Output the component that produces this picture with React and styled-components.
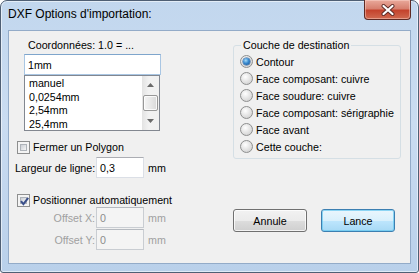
import React from 'react';
import styled, { createGlobalStyle } from 'styled-components';

const GlobalStyle = createGlobalStyle`
  html, body {
    margin: 0;
    padding: 0;
    background: #ffffff;
  }
  body {
    font-family: "Liberation Sans", Arial, sans-serif;
    font-size: 10.7px;
    color: #000;
  }
  * {
    box-sizing: border-box;
  }
`;

const Window = styled.div`
  width: 419px;
  height: 273px;
  border: 1px solid #4f5f74;
  border-radius: 7px 7px 3px 3px;
  background: linear-gradient(to bottom, #c2d7ee 0%, #cadcf1 45%, #b9d0ea 100%);
  box-shadow: inset 0 0 0 1px rgba(255, 255, 255, 0.55);
  padding: 0 7px 8px;
  display: flex;
  flex-direction: column;
`;

const TitleBar = styled.div`
  height: 29px;
  display: flex;
  justify-content: space-between;
  align-items: flex-start;
`;

const Title = styled.div`
  font-size: 12px;
  line-height: 15px;
  margin-top: 6px;
`;

const CloseButton = styled.div`
  width: 47px;
  height: 20px;
  margin-top: -1px;
  border: 1px solid #5e2a24;
  border-top: none;
  border-radius: 0 0 4px 4px;
  background: linear-gradient(to bottom, #e9a99b 0%, #d7806f 45%, #c4432d 55%, #d06a50 100%);
  box-shadow: inset 0 0 0 1px rgba(255, 220, 210, 0.45);
  display: flex;
  align-items: center;
  justify-content: center;
`;

const Client = styled.div`
  flex: 1;
  background: #f0f0f0;
  border: 1px solid #93abc8;
  display: flex;
`;

const LeftCol = styled.div`
  width: 224px;
  display: flex;
  flex-direction: column;
`;

const RightCol = styled.div`
  width: 168px;
  display: flex;
  flex-direction: column;
`;

const Caption = styled.div`
  margin: 8px 0 0 19px;
  line-height: 13px;
`;

const TextBox = styled.div`
  width: ${(p) => p.$width}px;
  height: 21px;
  padding-left: 3px;
  display: flex;
  align-items: center;
  background: ${(p) => (p.$disabled ? '#f4f4f4' : '#ffffff')};
  color: ${(p) => (p.$disabled ? '#8d8d8d' : '#000')};
  border: 1px solid ${(p) => (p.$focused ? '#a9c6e3' : p.$disabled ? '#c9cdd2' : '#dbdfe6')};
  border-top-color: ${(p) => (p.$focused ? '#7ea5cc' : p.$disabled ? '#b5b9bf' : '#abadb3')};
`;

const MainInput = styled(TextBox)`
  margin: 2px 0 0 15px;
`;

const ListBox = styled.div`
  margin-left: 15px;
  width: 136px;
  height: 56px;
  border: 1px solid #828790;
  background: #fff;
  display: flex;
`;

const ListItems = styled.div`
  flex: 1;
  padding: 1px 0 0 4px;
  line-height: 13.5px;
  overflow: hidden;
`;

const ScrollBar = styled.div`
  width: 17px;
  background: linear-gradient(to right, #e3e3e3, #f2f2f2 40%, #f0f0f0);
  display: flex;
  flex-direction: column;
  align-items: center;
`;

const ScrollArrow = styled.div`
  width: 17px;
  height: 17px;
  display: flex;
  align-items: center;
  justify-content: center;
`;

const ScrollThumb = styled.div`
  width: 15px;
  height: 16px;
  margin: 2px 0 1px;
  border: 1px solid #979797;
  border-radius: 2px;
  background: linear-gradient(to right, #f4f4f4, #e8e8e8 50%, #d9d9d9);
  box-shadow: inset 0 0 0 1px rgba(255, 255, 255, 0.8);
`;

const CheckRow = styled.div`
  margin: ${(p) => p.$top}px 0 0 8px;
  height: 13px;
  display: flex;
  align-items: center;
  gap: 3px;
  line-height: 13px;
`;

const CheckBox = styled.div`
  width: 13px;
  height: 13px;
  border: 1px solid #8e8f8f;
  background: #f4f4f4;
  padding: 2px;
  flex: none;
  position: relative;
`;

const CheckInner = styled.div`
  width: 7px;
  height: 7px;
  background: linear-gradient(135deg, #cbcfd5, #f6f6f6);
  border: 1px solid #aeb3b9;
`;

const CheckMark = styled.svg`
  position: absolute;
  left: 0;
  top: 0;
`;

const FieldRow = styled.div`
  margin-top: ${(p) => p.$top}px;
  display: flex;
  align-items: center;
`;

const FieldLabel = styled.div`
  width: 87px;
  text-align: ${(p) => (p.$right ? 'right' : 'left')};
  padding: ${(p) => (p.$right ? '0 1px 0 0' : '0 0 0 6px')};
  color: ${(p) => (p.$disabled ? '#a0a0a0' : '#000')};
  white-space: nowrap;
`;

const Unit = styled.div`
  margin-left: 4px;
  color: ${(p) => (p.$disabled ? '#a0a0a0' : '#000')};
`;

const GroupBox = styled.fieldset`
  margin: 8px 0 0;
  min-width: 0;
  width: 168px;
  padding: 0 0 3px 6px;
  border: 1px solid #d5dfe5;
  border-radius: 3px;
`;

const Legend = styled.legend`
  padding: 0 2px;
  margin-left: 1px;
  line-height: 13px;
`;

const RadioList = styled.div`
  padding-top: 1px;
  display: flex;
  flex-direction: column;
`;

const RadioRow = styled.div`
  height: 17px;
  display: flex;
  align-items: center;
  gap: 3px;
`;

const Radio = styled.div`
  width: 13px;
  height: 13px;
  border-radius: 50%;
  border: 1px solid #8e8f8f;
  background: radial-gradient(circle at 40% 35%, #ffffff 0%, #e6e6e6 45%, #c9c9c9 100%);
  display: flex;
  align-items: center;
  justify-content: center;
  flex: none;
`;

const RadioDot = styled.div`
  width: 7px;
  height: 7px;
  border-radius: 50%;
  background: radial-gradient(circle at 40% 35%, #a8dcf8 0%, #3a8bd0 45%, #0f4a8f 100%);
  box-shadow: 0 0 0 0.5px #2b5b94;
`;

const ButtonRow = styled.div`
  margin-top: 50px;
  display: flex;
  gap: 14px;
`;

const Button = styled.div`
  width: 74px;
  height: 23px;
  border: 1px solid ${(p) => (p.$primary ? '#3c7fb1' : '#707070')};
  border-radius: 3px;
  display: flex;
  align-items: center;
  justify-content: center;
  background: ${(p) =>
    p.$primary
      ? 'linear-gradient(to bottom, #eaf6fd 0%, #d9f0fc 50%, #bee6fd 51%, #a7d9f5 100%)'
      : 'linear-gradient(to bottom, #f2f2f2 0%, #ebebeb 50%, #dddddd 51%, #cfcfcf 100%)'};
  box-shadow: inset 0 0 0 1px ${(p) => (p.$primary ? 'rgba(100,200,240,0.7)' : 'rgba(255,255,255,0.75)')};
`;

const units = ['manuel', '0,0254mm', '2,54mm', '25,4mm'];
const layers = [
  'Contour',
  'Face composant: cuivre',
  'Face soudure: cuivre',
  'Face composant: sérigraphie',
  'Face avant',
  'Cette couche:',
];

function Check({ checked, top, children }) {
  return (
    <CheckRow $top={top}>
      <CheckBox>
        <CheckInner />
        {checked && (
          <CheckMark width="13" height="13" viewBox="0 0 13 13">
            <path d="M3 6.2 L5.4 9.2 L10.2 2.8" fill="none" stroke="#3a4f8a" strokeWidth="2" />
          </CheckMark>
        )}
      </CheckBox>
      <span>{children}</span>
    </CheckRow>
  );
}

export default function App() {
  return (
    <>
      <GlobalStyle />
      <Window>
        <TitleBar>
          <Title>DXF Options d'importation:</Title>
          <CloseButton>
            <svg width="14" height="12" viewBox="0 0 14 12">
              <path d="M2.5 2 L11.5 10 M11.5 2 L2.5 10" stroke="#5a2a26" strokeWidth="4" strokeLinecap="round" />
              <path d="M2.5 2 L11.5 10 M11.5 2 L2.5 10" stroke="#ffffff" strokeWidth="2.2" strokeLinecap="round" />
            </svg>
          </CloseButton>
        </TitleBar>
        <Client>
          <LeftCol>
            <Caption>Coordonnées: 1.0 = ...</Caption>
            <MainInput $width={137} $focused>1mm</MainInput>
            <ListBox>
              <ListItems>
                {units.map((u) => (
                  <div key={u}>{u}</div>
                ))}
              </ListItems>
              <ScrollBar>
                <ScrollArrow>
                  <svg width="7" height="4" viewBox="0 0 7 4">
                    <path d="M0 4 L3.5 0 L7 4 Z" fill="#6a6a6a" />
                  </svg>
                </ScrollArrow>
                <ScrollThumb />
                <ScrollArrow>
                  <svg width="7" height="4" viewBox="0 0 7 4">
                    <path d="M0 0 L3.5 4 L7 0 Z" fill="#6a6a6a" />
                  </svg>
                </ScrollArrow>
              </ScrollBar>
            </ListBox>
            <Check top={10}>Fermer un Polygon</Check>
            <FieldRow $top={3}>
              <FieldLabel>Largeur de ligne:</FieldLabel>
              <TextBox $width={48}>0,3</TextBox>
              <Unit>mm</Unit>
            </FieldRow>
            <Check top={16} checked>
              Positionner automatiquement
            </Check>
            <FieldRow $top={0}>
              <FieldLabel $right $disabled>Offset X:</FieldLabel>
              <TextBox $width={48} $disabled>0</TextBox>
              <Unit $disabled>mm</Unit>
            </FieldRow>
            <FieldRow $top={1}>
              <FieldLabel $right $disabled>Offset Y:</FieldLabel>
              <TextBox $width={48} $disabled>0</TextBox>
              <Unit $disabled>mm</Unit>
            </FieldRow>
          </LeftCol>
          <RightCol>
            <GroupBox>
              <Legend>Couche de destination</Legend>
              <RadioList>
                {layers.map((l, i) => (
                  <RadioRow key={l}>
                    <Radio>{i === 0 && <RadioDot />}</Radio>
                    <span>{l}</span>
                  </RadioRow>
                ))}
              </RadioList>
            </GroupBox>
            <ButtonRow>
              <Button>Annule</Button>
              <Button $primary>Lance</Button>
            </ButtonRow>
          </RightCol>
        </Client>
      </Window>
    </>
  );
}
